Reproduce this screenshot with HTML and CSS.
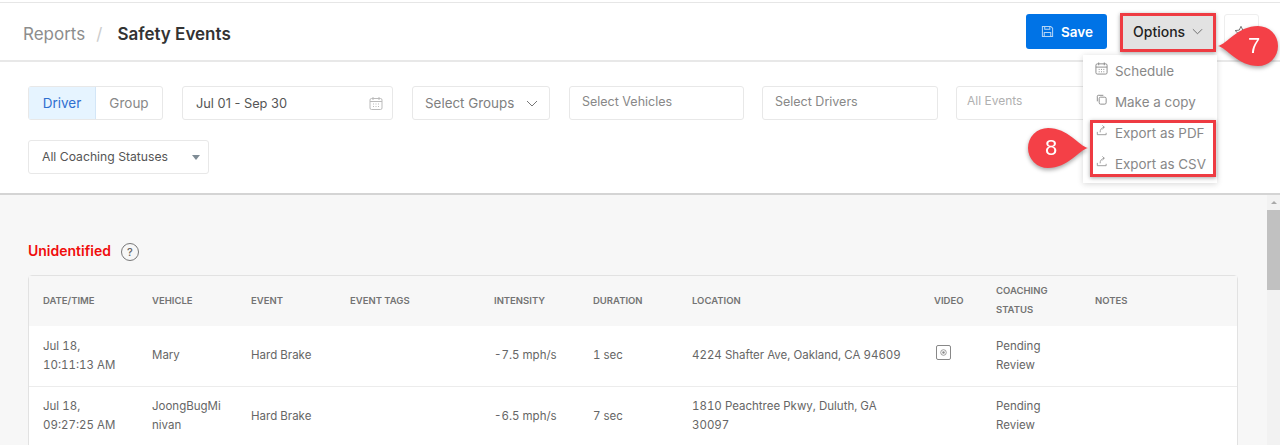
FILE: index.html
```html
<!DOCTYPE html>
<html lang="en">
<head>
<meta charset="utf-8">
<title>Safety Events</title>
<link rel="stylesheet" href="styles.css">
</head>
<body>
<div class="page">
  <header class="header">
    <nav class="crumbs"><span class="crumb-root">Reports</span><span class="crumb-sep">/</span><span class="crumb-current">Safety Events</span></nav>
    <div class="actions">
      <button class="btn-save">
        <svg class="save-icon" viewBox="0 0 14 14" fill="none" stroke="currentColor" stroke-width="1.1"><path d="M1.5 1.5h9l2 2v9h-11z"/><path d="M4 1.5v3h5.5v-3M3.5 12.5V8h7v4.500"/></svg>
        Save
      </button>
      <button class="btn-options">Options
        <svg class="chev" viewBox="0 0 12 7" fill="none" stroke="currentColor" stroke-width="1"><path d="M1 1l5 5 5-5"/></svg>
      </button>
      <button class="btn-star">
        <svg viewBox="0 0 16 16" fill="none" stroke="#666" stroke-width="1"><path d="M8 1.500l2 4.300 4.700.6-3.400 3.200.9 4.700L8 11.900l-4.200 2.400.9-4.700L1.300 6.400 6 5.800z"/></svg>
      </button>
    </div>
  </header>

  <section class="filters">
    <div class="seg"><span class="seg-item seg-on">Driver</span><span class="seg-item">Group</span></div>
    <div class="field field-date"><span>Jul 01 - Sep 30</span>
      <svg class="cal" viewBox="0 0 14 14" fill="none" stroke="#bbb" stroke-width="1"><rect x="1" y="2" width="12" height="11" rx="1.500"/><path d="M1 5h12M4 .5v3M10 .5v3M4 7.500h1M6.500 7.500h1M9 7.500h1M4 10h1M6.500 10h1M9 10h1"/></svg>
    </div>
    <div class="field field-groups"><span>Select Groups</span>
      <svg class="chev-g" viewBox="0 0 12 7" fill="none" stroke="#777" stroke-width="1"><path d="M1 1l5 5 5-5"/></svg>
    </div>
    <div class="field field-multi field-vehicles">Select Vehicles</div>
    <div class="field field-multi field-drivers">Select Drivers</div>
    <div class="field field-multi field-events">All Events</div>
    <div class="field field-coach"><span>All Coaching Statuses</span><i class="caret"></i></div>
  </section>

  <div class="body-wrap">
    <main class="content">
      <h2 class="section-title"><span>Unidentified</span><span class="help">?</span></h2>
      <div class="table-card">
        <table class="events">
          <thead>
            <tr>
              <th class="c-date">DATE/TIME</th><th class="c-veh">VEHICLE</th><th class="c-ev">EVENT</th><th class="c-tags">EVENT TAGS</th><th class="c-int">INTENSITY</th><th class="c-dur">DURATION</th><th class="c-loc">LOCATION</th><th class="c-vid">VIDEO</th><th class="c-coach">COACHING STATUS</th><th>NOTES</th>
            </tr>
          </thead>
          <tbody>
            <tr>
              <td>Jul 18,<br>10:11:13 AM</td><td>Mary</td><td>Hard Brake</td><td></td><td>-7.5 mph/s</td><td>1 sec</td><td>4224 Shafter Ave, Oakland, CA 94609</td>
              <td><svg class="vid" viewBox="0 0 15 15" fill="none" stroke="#888"><rect x=".5" y=".5" width="14" height="14" rx="1.500"/><circle cx="7.500" cy="7.500" r="2.800" stroke-width=".8"/><circle cx="7.500" cy="7.500" r="1.200" fill="#888" stroke="none"/></svg></td>
              <td>Pending Review</td><td></td>
            </tr>
            <tr>
              <td>Jul 18,<br>09:27:25 AM</td><td class="brk">JoongBugMinivan</td><td>Hard Brake</td><td></td><td>-6.5 mph/s</td><td>7 sec</td><td>1810 Peachtree Pkwy, Duluth, GA 30097</td><td></td><td>Pending Review</td><td></td>
            </tr>
          </tbody>
        </table>
      </div>
    </main>
    <div class="scrollbar"><i class="sb-up"></i><i class="sb-thumb"></i></div>
  </div>

  <ul class="menu">
    <li><svg viewBox="0 0 14 14" fill="none" stroke="#888" stroke-width="1"><rect x="1" y="2" width="12" height="11" rx="1.500"/><path d="M1 5.500h12M4 .5v3M10 .5v3M4 8h1M6.500 8h1M9 8h1M4 10.500h1M6.500 10.500h1M9 10.500h1"/></svg>Schedule</li>
    <li><svg viewBox="0 0 14 14" fill="none" stroke="#888" stroke-width="1"><rect x="4.500" y="4.500" width="7.500" height="7.500" rx="1.500"/><path d="M9 2.500H3.500a1 1 0 0 0-1 1V9"/></svg>Make a copy</li>
    <li><svg viewBox="0 0 14 14" fill="none" stroke="#999" stroke-width="1"><path d="M2.500 8.500v3h9.500V9.500M5.500 9c0-3 1.500-5 4.500-5.500M8 1.500l2 2-2 2"/></svg>Export as PDF</li>
    <li><svg viewBox="0 0 14 14" fill="none" stroke="#999" stroke-width="1"><path d="M2.500 8.500v3h9.500V9.500M5.500 9c0-3 1.500-5 4.500-5.500M8 1.500l2 2-2 2"/></svg>Export as CSV</li>
  </ul>

  <div class="mark mark-options"></div>
  <div class="mark mark-export"></div>

  <div class="callout callout-7">
    <svg viewBox="0 0 62 42"><path d="M1 21C10 19 21 1 41 1a20 20 0 0 1 0 40C21 41 10 23 1 21z" fill="#f44047"/></svg>
    <span>7</span>
  </div>
  <div class="callout callout-8">
    <svg viewBox="0 0 62 42"><path d="M61 21C52 19 41 1 21 1a20 20 0 0 0 0 40C41 41 52 23 61 21z" fill="#f44047"/></svg>
    <span>8</span>
  </div>
</div>
</body>
</html>
```

FILE: styles.css
```css
* { box-sizing: border-box; }
html, body { margin: 0; padding: 0; }
body {
  font-family: Inter, "Liberation Sans", sans-serif;
  color: #555;
  background: #fff;
  overflow: hidden;
}
.page { position: relative; width: 1280px; height: 445px; overflow: hidden; padding-top: 2px; }

.header {
  display: flex;
  justify-content: space-between;
  align-items: center;
  height: 60px;
  padding: 0 21px 0 23px;
  border-top: 1px solid #e6e6e6;
  border-bottom: 2px solid #e8e8e8;
}
.crumbs { display: flex; align-items: center; font-size: 17px; line-height: 24px; padding-top: 5px; }
.crumb-root { color: #8d8d8d; }
.crumb-sep { color: #ccc; margin: 0 15px 0 11px; }
.crumb-current { color: #333; font-weight: 600; }

.actions { display: flex; align-items: center; }
.actions button { font-family: inherit; cursor: pointer; }
.btn-save {
  display: flex; align-items: center; gap: 7px;
  width: 81px; height: 35px; padding: 0 0 0 15px;
  background: #0073e6; color: #fff;
  border: 0; border-radius: 3px;
  font-size: 13.500px; font-weight: 600;
}
.save-icon { width: 13px; height: 13px; color: #b5d5f5; }
.btn-options {
  display: flex; align-items: center; gap: 7px;
  width: 90px; height: 35px; margin-left: 16px; padding: 0 0 0 10px;
  background: #e2e2e2; color: #222;
  border: 0; font-size: 14px; font-weight: 500;
}
.chev { width: 11px; height: 7px; color: #666; }
.btn-star {
  width: 35px; height: 35px; margin-left: 11px; padding: 0 0 0 9px;
  background: #fff; border: 1px solid #eee; border-radius: 3px;
  display: flex; align-items: center;
}
.btn-star svg { width: 14px; height: 14px; }

.filters {
  display: flex; flex-wrap: wrap;
  column-gap: 19px; row-gap: 20px;
  height: 133px;
  align-content: flex-start;
  padding: 24px 0 0 28px;
  border-bottom: 2px solid #d4d4d4;
}
.seg {
  display: flex; height: 34px; width: 135px;
  border: 1px solid #e8e8e8; border-radius: 3px;
  font-size: 13.500px; color: #888;
}
.seg-item { flex: 1; display: flex; align-items: center; justify-content: center; }
.seg-on { flex: 0 0 67px; background: #e6f4ff; color: #2f6fd0; border-right: 1px solid #d3e6f7; }
.field {
  display: flex; align-items: center; justify-content: space-between;
  height: 34px;
  border: 1px solid #e8e8e8; border-radius: 3px;
  background: #fff;
  font-size: 13px;
}
.field-date { width: 211px; padding: 0 9px 0 13px; color: #555; font-size: 12.800px; }
.cal { width: 14px; height: 15px; }
.field-groups { width: 138px; padding: 0 11px 0 12px; font-size: 13.400px; color: #808080; }
.chev-g { width: 12px; height: 7px; }
.field-multi { align-items: flex-start; padding: 7px 0 0 12px; color: #888; font-size: 12.500px; line-height: 15px; }
.field-vehicles { width: 175px; margin-right: -1px; }
.field-drivers { width: 176px; margin-right: -1px; }
.field-events { width: 175px; padding-left: 10px; padding-top: 6px; color: #b0b0b0; font-size: 12px; }
.field-coach { width: 181px; padding: 0 9px 2px 13px; font-size: 12.200px; color: #555; }
.caret {
  width: 0; height: 0; margin: 2px -1px 0 0;
  border-left: 4px solid transparent; border-right: 4px solid transparent;
  border-top: 5px solid #7f8c95;
}

.body-wrap { display: flex; background: #f7f7f7; height: 250px; }
.content { flex: 1; padding: 45px 29px 0 28px; min-width: 0; }
.section-title {
  display: flex; align-items: center; gap: 10px;
  height: 20px; margin: 0 0 15px;
  font-size: 14px; font-weight: 600; color: #f00d0d;
}
.help {
  display: flex; align-items: center; justify-content: center;
  width: 18px; height: 18px; margin-top: 3px;
  border: 1px solid #777; border-radius: 50%;
  font-size: 11px; font-weight: 500; color: #666;
}
.table-card { border: 1px solid #e2e2e2; border-radius: 4px 4px 0 0; background: #fff; }
.events { width: 100%; table-layout: fixed; border-collapse: collapse; font-size: 11.500px; line-height: 19px; }
.events th {
  height: 50px; padding: 0 14px 2px; background: #f7f7f7;
  text-align: left; font-size: 9.500px; font-weight: 600; color: #737373;
}
.events td { height: 60px; padding: 0 14px; color: #666; border-top: 1px solid #ececec; font-variant-numeric: tabular-nums; }
.events tbody tr:first-child td { border-top: 0; }
.events .brk { word-break: break-all; }
.c-date { width: 109px; }
.c-veh, .c-ev, .c-int, .c-dur, .c-coach { width: 99px; }
.c-tags { width: 144px; }
.c-loc { width: 242px; }
.c-vid { width: 62px; }
.vid { display: block; width: 15px; height: 15px; margin: -7px 0 0 2px; }

.scrollbar { width: 13px; background: #f2f2f2; padding-top: 6px; display: flex; flex-direction: column; align-items: center; }
.sb-up { width: 0; height: 0; border-left: 3px solid transparent; border-right: 3px solid transparent; border-bottom: 3px solid #a9a9a9; margin-bottom: 6px; }
.sb-thumb { width: 13px; height: 80px; background: #c1c1c1; }

.menu {
  position: absolute; left: 1083px; top: 55px;
  width: 134px; height: 128px;
  margin: 0; padding: 0;
  list-style: none; background: #fff;
  box-shadow: 0 1px 6px rgba(0,0,0,.16);
  font-size: 13.400px; color: #888;
}
.menu li { display: flex; align-items: center; height: 31px; padding-left: 12px; }
.menu svg { width: 13px; height: 13px; margin: -4px 7px 0 0; flex: none; }

.mark { position: absolute; border: 3px solid #ee3b42; box-shadow: 0 1px 4px rgba(0,0,0,.35); }
.mark-options { left: 1120px; top: 13px; width: 96px; height: 39px; }
.mark-export { left: 1090px; top: 120px; width: 126px; height: 57px; }

.callout { position: absolute; width: 62px; height: 42px; filter: drop-shadow(0 2px 2px rgba(0,0,0,.35)); }
.callout svg { display: block; width: 62px; height: 42px; }
.callout span {
  position: absolute; top: 0; line-height: 42px; width: 40px; text-align: center;
  font-family: "Liberation Sans", sans-serif; font-size: 22px; color: #fff;
}
.callout-7 { left: 1217px; top: 25px; }
.callout-7 span { left: 17px; }
.callout-8 { left: 1027px; top: 127px; }
.callout-8 span { left: 4px; }
```
